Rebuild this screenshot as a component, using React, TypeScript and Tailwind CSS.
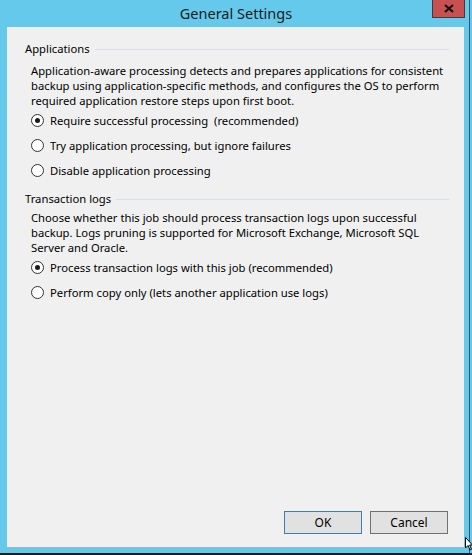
import React from "react";

function Radio({ checked, label }: { checked?: boolean; label: string }) {
  return (
    <div className="flex h-[25px] items-center pl-[6px]">
      <span className="flex h-[13px] w-[13px] shrink-0 items-center justify-center rounded-full border border-[#333333] bg-white">
        {checked && <span className="h-[5px] w-[5px] rounded-full bg-[#1a1a1a]" />}
      </span>
      <span className="ml-[6px] whitespace-pre">{label}</span>
    </div>
  );
}

function Heading({ text }: { text: string }) {
  return (
    <div className="flex items-center pr-[15px]">
      <span className="whitespace-nowrap">{text}</span>
      <span className="ml-[5px] mt-[2px] h-0 flex-1 border-t border-[#d5dfe5]" />
    </div>
  );
}

export default function App() {
  return (
    <div
      className="relative h-[555px] w-[472px] overflow-hidden bg-[#65c9eb] text-[11.25px] leading-[15px] text-black"
      style={{ fontFamily: '"Segoe UI", "Noto Sans", "Open Sans", sans-serif' }}
    >
      <div className="flex h-[26px] items-center justify-center text-[14.5px] text-[#1b1b1b]">
        General Settings
      </div>
      <div className="absolute right-[7px] top-0 flex h-[18px] w-[33px] items-center justify-center border border-t-0 border-[#3c3c3c] bg-[#c75050]">
        <svg width="10" height="9" viewBox="0 0 10 9">
          <path d="M1 1 L9 8 M9 1 L1 8" stroke="#111" strokeWidth="2.2" />
        </svg>
      </div>
      <div className="absolute right-[2px] top-0 h-[555px] w-px bg-[#3b5866]" />
      <div className="absolute bottom-0 left-0 h-[2px] w-[472px] bg-[#1e1e1e]" />

      <div className="ml-[7px] mt-[1px] flex h-[520px] w-[457px] flex-col bg-[#f0f0f0] pl-[18px] shadow-[0_1px_0_#9cb8c4]">
        <div className="pt-[13.5px]">
          <Heading text="Applications" />
        </div>
        <div className="mt-[7px] pl-[6px]">
          <div className="whitespace-nowrap">Application-aware processing detects and prepares applications for consistent</div>
          <div className="whitespace-nowrap">backup using application-specific methods, and configures the OS to perform</div>
          <div className="whitespace-nowrap">required application restore steps upon first boot.</div>
        </div>
        <Radio checked label="Require successful processing  (recommended)" />
        <Radio label="Try application processing, but ignore failures" />
        <Radio label="Disable application processing" />

        <div className="mt-[8px]">
          <Heading text="Transaction logs" />
        </div>
        <div className="mt-[4px] pl-[6px]">
          <div className="whitespace-nowrap">Choose whether this job should process transaction logs upon successful</div>
          <div className="whitespace-nowrap">backup. Logs pruning is supported for Microsoft Exchange, Microsoft SQL</div>
          <div className="whitespace-nowrap">Server and Oracle.</div>
        </div>
        <Radio checked label="Process transaction logs with this job (recommended)" />
        <Radio label="Perform copy only (lets another application use logs)" />

        <div className="mt-auto flex justify-end gap-[8px] pb-[13px] pr-[16px]">
          <button className="h-[23px] w-[78px] border border-[#3c7fb1] bg-[#e1e1e1] text-[12px]">OK</button>
          <button className="h-[23px] w-[78px] border border-[#707070] bg-[#e1e1e1] text-[12px]">Cancel</button>
        </div>
      </div>

      <svg className="absolute left-[465px] top-[537px]" width="8" height="14" viewBox="0 0 8 14">
        <path d="M0.5 0.5 L0.5 11 L3 8.5 L5 13 L6.5 12.3 L4.6 8 L7.5 8 Z" fill="#fff" stroke="#000" strokeWidth="1" />
      </svg>
    </div>
  );
}
